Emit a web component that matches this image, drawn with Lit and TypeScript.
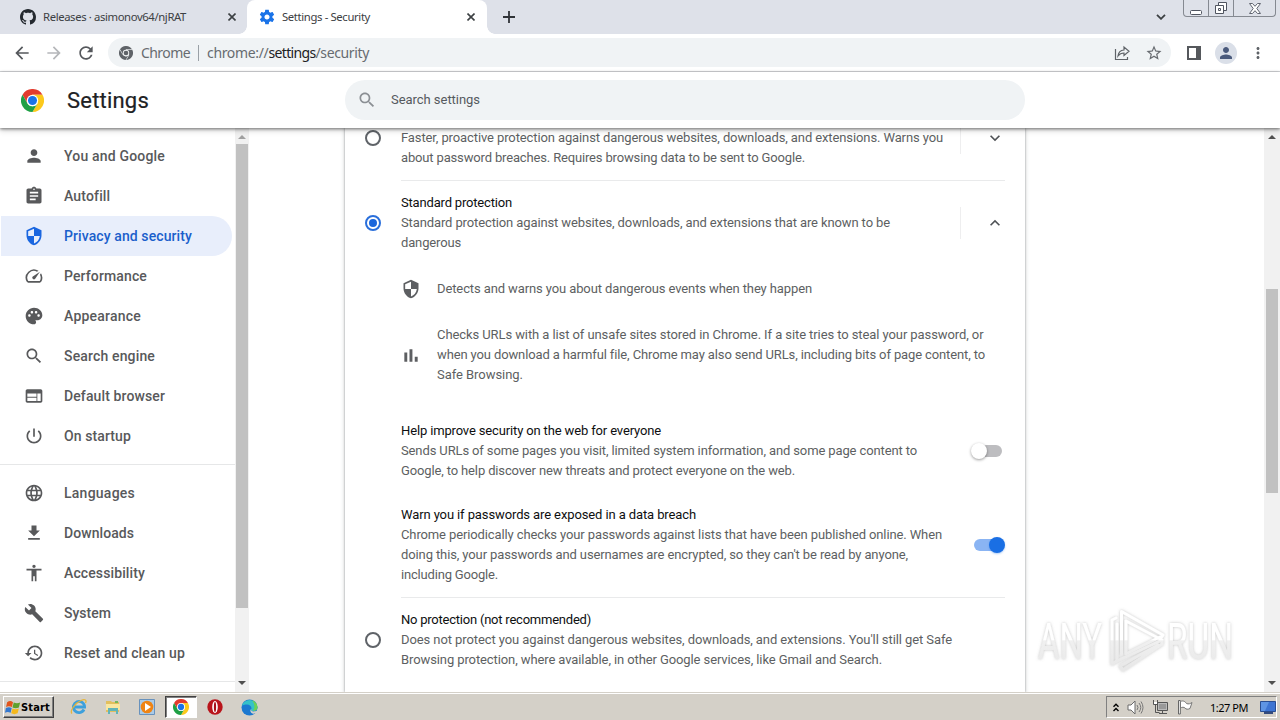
import { LitElement, html, svg, css } from "lit";
import { customElement, property } from "lit/decorators.js";

/* A single line of text whose tracking is adjusted to fill the given width. */
@customElement("fit-text")
class FitText extends LitElement {
  @property() text = "";
  @property({ type: Number }) w = 0;
  static styles = css`
    :host { display: block; white-space: pre; }
    .run { display: inline-block; }
  `;
  firstUpdated() {
    const run = this.renderRoot.querySelector(".run") as HTMLElement;
    const natural = run.getBoundingClientRect().width;
    run.style.letterSpacing = `${(this.w - natural) / this.text.length}px`;
  }
  render() { return html`<span class="run">${this.text}</span>`; }
}

const fit = (text: string, w: number) => html`<fit-text .text=${text} .w=${w}></fit-text>`;

const P: Record<string, string> = {
  person: "M12 12c2.21 0 4-1.79 4-4s-1.79-4-4-4-4 1.79-4 4 1.79 4 4 4zm0 2c-2.67 0-8 1.34-8 4v2h16v-2c0-2.66-5.33-4-8-4z",
  assignment: "M19 3h-4.18C14.4 1.84 13.3 1 12 1c-1.3 0-2.4.84-2.82 2H5c-1.1 0-2 .9-2 2v14c0 1.1.9 2 2 2h14c1.1 0 2-.9 2-2V5c0-1.1-.9-2-2-2zm-7 0c.55 0 1 .45 1 1s-.45 1-1 1-1-.45-1-1 .45-1 1-1zm2 14H7v-2h7v2zm3-4H7v-2h10v2zm0-4H7V7h10v2z",
  shield: "M12 1L3 5v6c0 5.55 3.84 10.74 9 12 5.16-1.26 9-6.45 9-12V5l-9-4zm0 10.99h7c-.53 4.12-3.28 7.79-7 8.94V12H5V6.3l7-3.11v8.8z",
  speed: "M20.38 8.57l-1.23 1.85a8 8 0 0 1-.22 7.58H5.07A8 8 0 0 1 15.58 6.85l1.85-1.23A10 10 0 0 0 3.35 19a2 2 0 0 0 1.72 1h13.85a2 2 0 0 0 1.74-1 10 10 0 0 0-.27-10.44zm-9.79 6.84a2 2 0 0 0 2.83 0l5.66-8.49-8.49 5.66a2 2 0 0 0 0 2.83z",
  palette: "M12 2C6.49 2 2 6.49 2 12s4.49 10 10 10c1.38 0 2.5-1.12 2.5-2.5 0-.61-.23-1.2-.64-1.67-.08-.1-.13-.21-.13-.33 0-.28.22-.5.5-.5H16c3.31 0 6-2.69 6-6 0-4.96-4.49-9-10-9zm-5.5 11c-.83 0-1.5-.67-1.5-1.5S5.67 10 6.5 10s1.5.67 1.5 1.5S7.33 13 6.5 13zm3-4C8.67 9 8 8.33 8 7.5S8.67 6 9.5 6s1.5.67 1.5 1.5S10.33 9 9.5 9zm5 0c-.83 0-1.5-.67-1.5-1.5S13.67 6 14.5 6s1.5.67 1.5 1.5S15.33 9 14.5 9zm4.5 2.5c0 .83-.67 1.5-1.5 1.5s-1.5-.67-1.5-1.5.67-1.5 1.5-1.5 1.5.67 1.5 1.5z",
  search: "M15.5 14h-.79l-.28-.27C15.41 12.59 16 11.11 16 9.5 16 5.91 13.09 3 9.5 3S3 5.91 3 9.5 5.91 16 9.5 16c1.61 0 3.09-.59 4.23-1.57l.27.28v.79l5 4.99L20.49 19l-4.99-5zm-6 0C7.01 14 5 11.99 5 9.5S7.01 5 9.5 5 14 7.01 14 9.5 11.99 14 9.5 14z",
  web: "M20 4H4c-1.1 0-1.99.9-1.99 2L2 18c0 1.1.9 2 2 2h16c1.1 0 2-.9 2-2V6c0-1.1-.9-2-2-2zm-5 14H4v-4h11v4zm0-5H4V9h11v4zm5 5h-4V9h4v9z",
  power: "M13 3h-2v10h2V3zm4.83 2.17l-1.42 1.42C17.99 7.86 19 9.81 19 12c0 3.87-3.13 7-7 7s-7-3.13-7-7c0-2.19 1.01-4.14 2.58-5.42L6.17 5.17C4.23 6.82 3 9.26 3 12c0 4.97 4.03 9 9 9s9-4.03 9-9c0-2.74-1.23-5.18-3.17-6.83z",
  globe: "M11.99 2C6.47 2 2 6.48 2 12s4.47 10 9.99 10C17.52 22 22 17.52 22 12S17.52 2 11.99 2zm6.93 6h-2.95c-.32-1.25-.78-2.45-1.38-3.56 1.84.63 3.37 1.91 4.33 3.56zM12 4.04c.83 1.2 1.48 2.53 1.91 3.96h-3.82c.43-1.43 1.08-2.76 1.91-3.96zM4.26 14C4.1 13.36 4 12.69 4 12s.1-1.36.26-2h3.38c-.08.66-.14 1.32-.14 2s.06 1.34.14 2H4.26zm.82 2h2.95c.32 1.25.78 2.45 1.38 3.56-1.84-.63-3.37-1.9-4.33-3.56zm2.95-8H5.08c.96-1.66 2.49-2.93 4.33-3.56C8.81 5.55 8.35 6.75 8.03 8zM12 19.96c-.83-1.2-1.48-2.53-1.91-3.96h3.82c-.43 1.43-1.08 2.76-1.91 3.96zM14.34 14H9.66c-.09-.66-.16-1.32-.16-2s.07-1.35.16-2h4.68c.09.65.16 1.32.16 2s-.07 1.34-.16 2zm.25 5.56c.6-1.11 1.06-2.31 1.38-3.56h2.95c-.96 1.65-2.49 2.93-4.33 3.56zM16.36 14c.08-.66.14-1.32.14-2s-.06-1.34-.14-2h3.38c.16.64.26 1.31.26 2s-.1 1.36-.26 2h-3.38z",
  download: "M19 9h-4V3H9v6H5l7 7 7-7zM5 18v2h14v-2H5z",
  access: "M12 2c1.1 0 2 .9 2 2s-.9 2-2 2-2-.9-2-2 .9-2 2-2zm9 7h-6v13h-2v-6h-2v6H9V9H3V7h18v2z",
  wrench: "M22.7 19l-9.1-9.1c.9-2.3.4-5-1.5-6.9-2-2-5-2.4-7.4-1.3L9 6 6 9 1.6 4.7C.4 7.1.9 10.1 2.9 12.1c1.9 1.9 4.6 2.4 6.9 1.5l9.1 9.1c.4.4 1 .4 1.4 0l2.3-2.3c.5-.4.5-1.1.1-1.4z",
  history: "M13 3c-4.97 0-9 4.03-9 9H1l3.89 3.89.07.14L9 12H6c0-3.87 3.13-7 7-7s7 3.13 7 7-3.13 7-7 7c-1.93 0-3.68-.79-4.94-2.06l-1.42 1.42C8.27 19.99 10.51 21 13 21c4.97 0 9-4.03 9-9s-4.03-9-9-9zm-1 5v5l4.28 2.54.72-1.21-3.5-2.08V8H12z",
  gear: "M19.43 12.98c.04-.32.07-.64.07-.98s-.03-.66-.07-.98l2.11-1.65c.19-.15.24-.42.12-.64l-2-3.46c-.12-.22-.39-.3-.61-.22l-2.49 1c-.52-.4-1.08-.73-1.69-.98l-.38-2.65C14.46 2.18 14.25 2 14 2h-4c-.25 0-.46.18-.49.42l-.38 2.65c-.61.25-1.17.59-1.69.98l-2.49-1c-.23-.09-.49 0-.61.22l-2 3.46c-.13.22-.07.49.12.64l2.11 1.65c-.04.32-.07.65-.07.98s.03.66.07.98l-2.11 1.65c-.19.15-.24.42-.12.64l2 3.46c.12.22.39.3.61.22l2.49-1c.52.4 1.08.73 1.69.98l.38 2.65c.03.24.24.42.49.42h4c.25 0 .46-.18.49-.42l.38-2.65c.61-.25 1.17-.59 1.69-.98l2.49 1c.23.09.49 0 .61-.22l2-3.46c.12-.22.07-.49-.12-.64l-2.11-1.65zM12 15.5c-1.93 0-3.5-1.57-3.5-3.5s1.57-3.5 3.5-3.5 3.5 1.57 3.5 3.5-1.57 3.5-3.5 3.5z",
  back: "M20 11H7.83l5.59-5.59L12 4l-8 8 8 8 1.41-1.41L7.83 13H20v-2z",
  forward: "M12 4l-1.41 1.41L16.17 11H4v2h12.17l-5.58 5.59L12 20l8-8z",
  reload: "M17.65 6.35C16.2 4.9 14.21 4 12 4c-4.42 0-7.99 3.58-7.99 8s3.57 8 7.99 8c3.73 0 6.84-2.55 7.73-6h-2.08c-.82 2.33-3.04 4-5.65 4-3.31 0-6-2.69-6-6s2.69-6 6-6c1.66 0 3.14.69 4.22 1.78L13 11h7V4l-2.35 2.35z",
  star: "M22 9.24l-7.19-.62L12 2 9.19 8.63 2 9.24l5.46 4.73L5.82 21 12 17.27 18.18 21l-1.63-7.03L22 9.24zM12 15.4l-3.76 2.27 1-4.28-3.32-2.88 4.38-.38L12 6.1l1.71 4.04 4.38.38-3.32 2.88 1 4.28L12 15.4z",
  more: "M12 8c1.1 0 2-.9 2-2s-.9-2-2-2-2 .9-2 2 .9 2 2 2zm0 2c-1.1 0-2 .9-2 2s.9 2 2 2 2-.9 2-2-.9-2-2-2zm0 6c-1.1 0-2 .9-2 2s.9 2 2 2 2-.9 2-2-.9-2-2-2z",
  down: "M7.41 8.59L12 13.17l4.59-4.58L18 10l-6 6-6-6 1.41-1.41z",
  up: "M7.41 15.41L12 10.83l4.59 4.58L18 14l-6-6-6 6z",
  bars: "M4 9h3.500v11H4zM10.200 5h3.500v15h-3.500zM16.500 14H20v6h-3.500z",
};

const icon = (name: string, size = 20) => html`<svg class="ic" width=${size} height=${size} viewBox="0 0 24 24"><path fill="currentColor" d=${P[name]}/></svg>`;

const chrome = (size: number, mono = false) => {
  const [r, g, y, b, w] = mono ? ["#5f6368", "#5f6368", "#5f6368", "#5f6368", "#f1f3f4"] : ["#e33b2e", "#1fa045", "#fcc91c", "#1a73e8", "#fff"];
  return html`<svg class="ic" width=${size} height=${size} viewBox="0 0 48 48">
    ${svg`<path fill=${r} d="M3.2 12A24 24 0 0 1 44.8 12H24L13.6 30z"/>
    <path fill=${y} d="M44.8 12A24 24 0 0 1 24 48L34.4 30 24 12z"/>
    <path fill=${g} d="M24 48A24 24 0 0 1 3.2 12L13.6 30A12 12 0 0 0 34.4 30z"/>
    ${mono ? svg`<path d="M24 12H45M13.6 30L3.2 12M34.4 30L24 48" stroke=${w} stroke-width="2"/>` : ""}
    <circle cx="24" cy="24" r=${mono ? 11 : 12} fill=${w}/><circle cx="24" cy="24" r=${mono ? 8 : 9.4} fill=${b}/>`}
  </svg>`;
};

const github = html`<svg class="ic" width="16" height="16" viewBox="0 0 16 16"><path fill="#24292f" d="M8 0C3.58 0 0 3.58 0 8c0 3.54 2.29 6.53 5.47 7.59.4.07.55-.17.55-.38 0-.19-.01-.82-.01-1.49-2.01.37-2.53-.49-2.69-.94-.09-.23-.48-.94-.82-1.13-.28-.15-.68-.52-.01-.53.63-.01 1.08.58 1.23.82.72 1.21 1.87.87 2.33.66.07-.52.28-.87.51-1.07-1.78-.2-3.64-.89-3.64-3.95 0-.87.31-1.59.82-2.15-.08-.2-.36-1.02.08-2.12 0 0 .67-.21 2.2.82.64-.18 1.32-.27 2-.27s1.36.09 2 .27c1.53-1.04 2.2-.82 2.2-.82.44 1.1.16 1.92.08 2.12.51.56.82 1.27.82 2.15 0 3.07-1.87 3.75-3.65 3.95.29.25.54.73.54 1.48 0 1.07-.01 1.93-.01 2.2 0 .21.15.46.55.38A8.01 8.01 0 0 0 16 8c0-4.42-3.58-8-8-8z"/></svg>`;

const close = html`<svg class="ic" width="8" height="8" viewBox="0 0 8 8"><path d="M.5.5l7 7M7.5.5l-7 7" stroke="#3c4043" stroke-width="1.6"/></svg>`;

const MENU: [string, string, number][] = [
  ["person", "You and Google", 101], ["assignment", "Autofill", 46], ["shield", "Privacy and security", 128],
  ["speed", "Performance", 83], ["palette", "Appearance", 77], ["search", "Search engine", 91],
  ["web", "Default browser", 101], ["power", "On startup", 67],
];
const MENU2: [string, string, number][] = [
  ["globe", "Languages", 71], ["download", "Downloads", 70], ["access", "Accessibility", 81],
  ["wrench", "System", 47], ["history", "Reset and clean up", 121],
];

@customElement("app-root")
class AppRoot extends LitElement {
  static styles = css`
    :host { display: flex; flex-direction: column; width: 1280px; height: 720px; overflow: hidden; position: relative;
      background: #fff; font-family: Roboto, sans-serif; font-size: 13px; color: #5f6368; }
    * { box-sizing: border-box; }
    .ic { display: block; flex: none; }
    .tabs { height: 34px; flex: none; background: #dee1e9; display: flex; align-items: flex-start; font: 11.3px/34px "Noto Sans", sans-serif; color: #3c4043; }
    .tab { height: 34px; display: flex; align-items: center; }
    .tab .ttl { flex: 1; }
    .t1 { width: 247px; padding: 0 11px 0 20px; gap: 7px; }
    .t2 { width: 240px; padding: 0 12px 0 12px; gap: 7px; background: #fff; border-radius: 8px 8px 0 0; position: relative; }
    .t2::before, .t2::after { content: ""; position: absolute; bottom: 0; width: 8px; height: 8px; }
    .t2::before { left: -8px; background: radial-gradient(circle at 0 0, transparent 7.5px, #fff 8px); }
    .t2::after { right: -8px; background: radial-gradient(circle at 100% 0, transparent 7.5px, #fff 8px); }
    .plus { margin: 11px 0 0 16px; }
    .tabmenu { margin: 14px 0 0 auto; }
    .win { margin: 0 4px 0 17px; width: 93px; height: 17px; border: 1px solid #858991; border-top: 0; border-radius: 0 0 4px 4px; display: flex; }
    .win span { display: flex; align-items: center; justify-content: center; border-right: 1px solid #858991; width: 25px; }
    .win span:last-child { border: 0; width: 41px; }
    .bar { height: 38px; flex: none; display: flex; align-items: center; border-bottom: 1px solid #d5d7da; padding: 0 11px 0 12px; color: #5f6368; }
    .bar .dim { color: #b5b7ba; }
    .nav { display: flex; gap: 12px; width: 96px; color: #55585c; }
    .omni { width: 1063px; height: 29px; border-radius: 15px; background: #f0f3f5; display: flex; align-items: center; padding: 0 8px 0 11px; font: 14px/28px "Noto Sans", sans-serif; color: #676b70; }
    .chr { margin-left: 8px; width: 49px; }
    .sep { width: 1px; height: 16px; background: #9aa0a6; margin: 0 8px; }
    .url { display: flex; flex: 1; }
    .url b { font-weight: 400; color: #202124; }
    .share { margin-right: 15px; }
    .panel { margin-left: 16px; }
    .avatar { width: 22px; height: 22px; border-radius: 50%; background: #dadfe8; display: grid; place-items: center; color: #4a5a7c; margin: 0 12px 0 14px; }
    .head { height: 56px; flex: none; display: flex; align-items: center; padding-left: 21px; position: relative; z-index: 2; background: #fff;
      box-shadow: 0 1px 3px rgba(0,0,0,.5), 0 3px 6px rgba(0,0,0,.14); }
    .title { margin-left: 23px; width: 278px; font-size: 22px; color: #202124; -webkit-text-stroke: .2px #202124; }
    .find { width: 680px; height: 40px; border-radius: 20px; background: #f0f3f5; display: flex; align-items: center; gap: 14px; padding: 0 0 1px 12px; color: #55595e; }
    .find .ic { color: #8b8f94; }
    .body { flex: 1; min-height: 0; display: flex; overflow: hidden; }
    .side { width: 235px; padding: 8px 3px 0 1px; overflow: hidden; font-size: 14px; font-weight: 500; color: #58595b; }
    .item { height: 40px; display: flex; align-items: center; gap: 20px; padding-left: 23px; border-radius: 0 20px 20px 0; }
    .on { background: #e8eefb; color: #1a5fcb; }
    .on .ic { color: #1a66e0; }
    .rule { height: 1px; background: #e6e7e8; margin: 8px -3px 8px -1px; }
    .sb { width: 14px; background: #f1f1f1; display: flex; flex-direction: column; align-items: center; flex: none; }
    .thumb { width: 12px; background: #c1c1c1; }
    .sb .ic { margin: 7px 0 5px; }
    .sb .end { margin: auto 0 7px; }
    .ss .thumb { height: 464px; }
    .ms { width: 16px; margin-left: auto; }
    .ms .thumb { margin-top: 145px; height: 204px; }
    .card { margin-left: 96px; width: 680px; background: #fff; padding: 0 19px 0 20px; line-height: 20px; color: #5d5f62;
      box-shadow: 0 0 2px rgba(60,64,67,.5), 0 1px 4px 1px rgba(60,64,67,.14); }
    .opt { display: flex; position: relative; }
    .r1 { height: 52px; }
    .r2, .r3 { padding-top: 12px; }
    .r2 { height: 98px; }
    .radio { width: 16px; height: 16px; border: 2px solid #5f6368; border-radius: 50%; margin: 2px 20px 0 0; flex: none; display: grid; place-items: center; }
    .r2 .radio, .r3 .radio { margin-top: 22px; }
    .sel { border-color: #2a6fdb; }
    .sel::after { content: ""; width: 8px; height: 8px; border-radius: 50%; background: #1a66dc; }
    .copy { width: 559px; flex: none; }
    .copy.wide { width: 569px; }
    .h { color: #0e0f10; }
    .exp { border-left: 1px solid #eeeeef; height: 32px; width: 45px; display: flex; align-items: center; justify-content: flex-end; }
    .exp .ic { color: #4f5256; }
    .r1 .exp { margin-top: -6px; }
    .r2 .exp { margin-top: 14px; }
    .hr { height: 1px; background: #e9eaeb; margin: 0 1px 0 36px; }
    .det { display: flex; align-items: center; gap: 16px; margin-left: 36px; }
    .d2 { margin: 26px 0 36px 36px; }
    .tog { display: flex; align-items: center; margin-left: 36px; }
    .g1 { height: 60px; margin-bottom: 24px; }
    .g2 { height: 80px; margin-bottom: 12px; }
    .sw { width: 28px; height: 12px; border-radius: 6px; background: #bdbdc0; display: flex; align-items: center; margin-left: 4px; }
    .sw::before { content: ""; width: 16px; height: 16px; border-radius: 50%; background: #fff; margin-left: -3px; box-shadow: 0 1px 3px rgba(0,0,0,.4); flex: none; }
    .sw.yes { background: #8ab4f3; justify-content: flex-end; width: 30px; }
    .sw.yes::before { background: #1a6fe4; margin: 0 -1px 0 0; box-shadow: 0 1px 2px rgba(26,111,228,.35); }
    .task { height: 28px; flex: none; background: #d4d0c8; border-top: 1px solid #d4d0c8; box-shadow: inset 0 1px #fff; display: flex; align-items: center; padding: 3px 3px 2px 3px; }
    .start { width: 51px; height: 22px; border: 1px solid; border-color: #fff #404040 #404040 #fff; box-shadow: inset -1px -1px #808080; display: flex; align-items: center; gap: 0; padding-left: 1px; color: #000; font: bold 11px "DejaVu Sans Condensed", "DejaVu Sans", sans-serif; }
    .q { width: 34px; height: 22px; display: grid; place-items: center; }
    .q.first { margin-left: 8px; }
    .act { width: 32px; background: #fff; border: 1px solid; border-color: #404040 #fff #fff #404040; box-shadow: inset 1px 1px #808080; margin: 0 1px; }
    .tray { margin-left: auto; width: 171px; height: 22px; border: 1px solid; border-color: #808080 #fff #fff #808080; display: flex; align-items: center; color: #000; font: 11px "Noto Sans", sans-serif; padding-left: 6px; }
    .tray .ic { margin-right: 8px; }
    .clock { margin: 0 12px 0 8px; width: 38px; }
    .tray .mon { margin: 0; }
    .mark { position: absolute; left: 1030px; top: 602px; z-index: 3; }
    .wt { font: 400 50px Roboto, sans-serif; }
  `;

  menu(list: [string, string, number][]) {
    return list.map(([i, t, w]) => html`<div class="item ${i === "shield" ? "on" : ""}">${icon(i)}${fit(t, w)}</div>`);
  }

  arrow(up: boolean, c = "#505050") {
    return html`<svg class="ic ${up ? "" : "end"}" width="8" height="4" viewBox="0 0 8 4"><path fill=${c} d=${up ? "M0 4L4 0l4 4z" : "M0 0h8L4 4z"}/></svg>`;
  }

  render() {
    return html`
      <div class="tabs">
        <div class="tab t1">${github}<div class="ttl">${fit("Releases · asimonov64/njRAT", 143)}</div>${close}</div>
        <div class="tab t2"><svg class="ic" width="16" height="16" viewBox="1 1 22 22"><path fill="#1a73e8" d=${P.gear}/></svg><div class="ttl">${fit("Settings - Security", 88)}</div>${close}</div>
        <svg class="ic plus" width="12" height="12" viewBox="0 0 12 12"><path d="M6 0v12M0 6h12" stroke="#303338" stroke-width="1.8"/></svg>
        <svg class="ic tabmenu" width="10" height="6" viewBox="0 0 10 6"><path d="M1 .8l4 4 4-4" fill="none" stroke="#3c4043" stroke-width="1.8"/></svg>
        <div class="win">
          <span><svg class="ic" width="12" height="13"><rect x=".5" y="8.5" width="11" height="4" rx="1" fill="#fff" stroke="#505560"/></svg></span>
          <span><svg class="ic" width="14" height="14"><path d="M4.500 1.500h8v8h-8z" fill="#fff" stroke="#505560"/><path d="M1.500 4.500h8v8h-8z" fill="#fff" stroke="#505560"/><path d="M4.500 7.500h2v2h-2z" fill="none" stroke="#505560"/></svg></span>
          <span><svg class="ic" width="12" height="11"><path d="M.5.5h3L6 3.300 8.500.5h3L7.800 5.500l3.700 5h-3L6 7.700l-2.500 2.800h-3l3.700-5z" fill="#fff" stroke="#606570"/></svg></span>
        </div>
      </div>
      <div class="bar">
        <div class="nav">${icon("back")}<span class="dim">${icon("forward")}</span>${icon("reload")}</div>
        <div class="omni">
          ${chrome(14, true)}<div class="chr">${fit("Chrome", 49)}</div><div class="sep"></div>
          <div class="url">${fit("chrome://", 61.5)}<b>${fit("settings", 47)}</b>${fit("/security", 53.5)}</div>
          <svg class="ic share" width="16" height="16" viewBox="0 0 16 16"><path d="M1.500 4v10.500h12V12M4 11c.5-4 2.500-5.800 6-6V2l5 4.300-5 4.200V8C7.500 8 5.500 9 4 11z" fill="none" stroke="#5f6368" stroke-width="1.200"/></svg>
          ${icon("star", 18)}
        </div>
        <svg class="ic panel" width="14" height="14"><path d="M1 1h12v12H1z" fill="none" stroke="#55585c" stroke-width="2"/><path d="M9 0h5v14H9z" fill="#55585c"/></svg>
        <div class="avatar">${icon("person", 18)}</div>
        ${icon("more", 18)}
      </div>
      <div class="head">${chrome(23)}<div class="title">${fit("Settings", 82)}</div>
        <div class="find">${icon("search")}${fit("Search settings", 89)}</div>
      </div>
      <div class="body">
        <div class="side">${this.menu(MENU)}<div class="rule"></div>${this.menu(MENU2)}<div class="rule"></div></div>
        <div class="sb ss">${this.arrow(true, "#a0a0a0")}<div class="thumb"></div>${this.arrow(false)}</div>
        <div class="card">
          <div class="opt r1"><div class="radio"></div>
            <div class="copy">${fit("Faster, proactive protection against dangerous websites, downloads, and extensions. Warns you", 542)}${fit("about password breaches. Requires browsing data to be sent to Google.", 404)}</div>
            <div class="exp">${icon("down")}</div></div>
          <div class="hr"></div>
          <div class="opt r2"><div class="radio sel"></div>
            <div class="copy"><div class="h">${fit("Standard protection", 111)}</div>${fit("Standard protection against websites, downloads, and extensions that are known to be", 489)}${fit("dangerous", 60)}</div>
            <div class="exp">${icon("up")}</div></div>
          <div class="det">${icon("shield")}<div>${fit("Detects and warns you about dangerous events when they happen", 375)}</div></div>
          <div class="det d2">${icon("bars")}<div>${fit("Checks URLs with a list of unsafe sites stored in Chrome. If a site tries to steal your password, or", 546.5)}${fit("when you download a harmful file, Chrome may also send URLs, including bits of page content, to", 547.5)}${fit("Safe Browsing.", 86)}</div></div>
          <div class="tog g1"><div class="copy wide"><div class="h">${fit("Help improve security on the web for everyone", 260)}</div>${fit("Sends URLs of some pages you visit, limited system information, and some page content to", 516)}${fit("Google, to help discover new threats and protect everyone on the web.", 394)}</div><div class="sw"></div></div>
          <div class="tog g2"><div class="copy wide"><div class="h">${fit("Warn you if passwords are exposed in a data breach", 295)}</div>${fit("Chrome periodically checks your passwords against lists that have been published online. When", 541)}${fit("doing this, your passwords and usernames are encrypted, so they can't be read by anyone,", 507)}${fit("including Google.", 97)}</div><div class="sw yes"></div></div>
          <div class="hr"></div>
          <div class="opt r3"><div class="radio"></div>
            <div class="copy"><div class="h">${fit("No protection (not recommended)", 190)}</div>${fit("Does not protect you against dangerous websites, downloads, and extensions. You'll still get Safe", 551)}${fit("Browsing protection, where available, in other Google services, like Gmail and Search.", 481)}</div></div>
        </div>
        <div class="sb ms">${this.arrow(true)}<div class="thumb"></div>${this.arrow(false)}</div>
      </div>
      <div class="task">
        <div class="start"><svg class="ic" width="16" height="15" viewBox="0 0 15 14"><path fill="#e2551c" d="M2 2q3-2 5.500 0L6.500 6.500q-3-1.500-5.500 0z"/><path fill="#5ea12c" d="M8.200 2.300q3 1.500 6 0L13 7q-3 1.500-6 0z"/><path fill="#3478cf" d="M.8 7.500q3-1.500 5.500 0l-1 4.500q-3-1.500-5.300 0z"/><path fill="#f4b81c" d="M7 8q3 1.500 6 0l-1.200 4.500q-3 1.500-6 0z"/></svg>${fit("Start", 29)}</div>
        <div class="q first"><svg class="ic" width="18" height="18" viewBox="0 0 18 18"><path d="M14 11.500A5.600 5.600 0 1 1 14.600 9H5" fill="none" stroke="#3da0dc" stroke-width="2.800"/><path d="M2 15.500C-.5 13 5 5 11 2.500c4-1.700 6-.5 4.500 2.500" fill="none" stroke="#e5b53b" stroke-width="1.300"/></svg></div>
        <div class="q"><svg class="ic" width="18" height="18" viewBox="0 0 18 18"><path fill="#e2bf5e" d="M2 3h5l1 1h7v10H2z"/><path fill="#fae7a0" d="M2 6h14v6H2z"/><path fill="#62b4b8" d="M4 10h10v6h-2v-3H6v3H4z"/><path fill="#75b85d" d="M11 3h3v2h-3z"/></svg></div>
        <div class="q"><svg class="ic" width="16" height="16" viewBox="0 0 16 16"><path fill="#aacbe8" stroke="#6892bd" d="M.5.5h15v15H.5z"/><circle cx="8" cy="8" r="6.300" fill="#ef8414"/><path fill="#fff" d="M6 4l6 4-6 4z"/></svg></div>
        <div class="q act">${chrome(16)}</div>
        <div class="q"><svg class="ic" width="16" height="16" viewBox="0 0 16 16"><ellipse cx="8" cy="8" rx="7.700" ry="7.700" fill="#b9141b"/><ellipse cx="8" cy="8" rx="2.800" ry="6" fill="#fff"/><ellipse cx="8" cy="8" rx="1.100" ry="5" fill="#a80f17"/></svg></div>
        <div class="q"><svg class="ic" width="17" height="17" viewBox="0 0 17 17"><circle cx="8.500" cy="8.500" r="8" fill="#1b78d0"/><path fill="#35c1c9" d="M.8 7A8 8 0 0 1 16.500 8c0 3-2 4-4.500 4-2 0-2.500-1-1.700-2C11 8 9 5.500 6 5.500 3.500 5.500 1.500 6 .8 7z"/><path fill="#6bd257" d="M11 1.300A8 8 0 0 1 16.500 8c0 3-2 4-4.500 4C14 9 14 5 11 1.300z"/><path fill="#d4d0c8" d="M10.300 10c-.8 1.200.5 2.500 2 2.500 2 0 3.500-.6 4.700-1.500v3l-3 .5c-4 1-6-3-3.700-4.500z"/></svg></div>
        <div class="tray">
          <svg class="ic" width="6" height="9" viewBox="0 0 6 9"><path d="M.5 3.700L3 1.200l2.500 2.500M.5 8L3 5.500 5.500 8" fill="none" stroke="#000" stroke-width="1.400"/></svg>
          <svg class="ic" width="17" height="15" viewBox="0 0 17 15"><path d="M1 5h3l4-4v13l-4-4H1z" fill="#fff" stroke="#6b6b6b"/><path d="M10 5q2 2.500 0 5M12 3q3.500 4.500 0 9M14 1.500q4 6 0 12" fill="none" stroke="#777"/></svg>
          <svg class="ic" width="17" height="16" viewBox="0 0 17 16"><path d="M5.500 3.500h10v8h-10z" fill="#bbb" stroke="#555"/><path d="M7 5h7v5H7z" fill="#999"/><path d="M7 14.500h8M10.500 12v2" stroke="#555"/><path d="M1.500 1v4.500h4V1M3.500 5.500v8h4" fill="none" stroke="#555"/><path d="M2 3h3v2H2z" fill="#fff"/></svg>
          <svg class="ic" width="17" height="16" viewBox="0 0 17 16"><path d="M1.500 1.500h1.800v13.500H1.500z" fill="#fff" stroke="#666"/><path d="M3.500 2.500c3-1.500 5 .5 6 2 2 1 4 0 5.500-1l-2 6c-2 1-4 1-5-.5-1-1-3-1-4.500 0z" fill="#fff" stroke="#777"/></svg>
          <div class="clock">${fit("1:27 PM", 38)}</div>
          <svg class="ic mon" width="16" height="13" viewBox="0 0 16 13"><path d="M.5.5h15v10H.5z" fill="#3d74d2" stroke="#294d91"/><path d="M1 1h8L5 10H1z" fill="#5e94e3"/><path d="M4 12h9" stroke="#344b7c" stroke-width="2"/></svg>
        </div>
      </div>
      <svg class="mark" width="220" height="84" viewBox="1030 602 220 84">
        <defs><linearGradient id="fade" x1="0" y1="605" x2="0" y2="668" gradientUnits="userSpaceOnUse"><stop offset=".55" stop-color="#fff"/><stop offset=".57" stop-color="#f0f0f0"/><stop offset="1" stop-color="#e8e8e8"/></linearGradient>
        <filter id="halo" x="-20%" y="-20%" width="140%" height="140%"><feDropShadow dx="0" dy="0" stdDeviation="1.800" flood-color="#888" flood-opacity=".5"/></filter></defs>
        <g filter="url(#halo)" fill="url(#fade)">
          <text class="wt" x="1038" y="659" textLength="64" lengthAdjust="spacingAndGlyphs">ANY</text>
          <text class="wt" x="1167" y="659" textLength="66" lengthAdjust="spacingAndGlyphs">RUN</text>
          <g fill="none" stroke="url(#fade)" stroke-width="3" stroke-linejoin="round" stroke-linecap="round">
            <path d="M1121.500 654V611.500L1163 635L1160 639L1126 621V654L1160 637"/>
            <path d="M1116 618L1112 620V664L1117 661V624"/>
            <path d="M1117 661L1162 640V644L1123 670L1120 666L1158 645"/>
          </g>
        </g>
      </svg>
    `;
  }
}
